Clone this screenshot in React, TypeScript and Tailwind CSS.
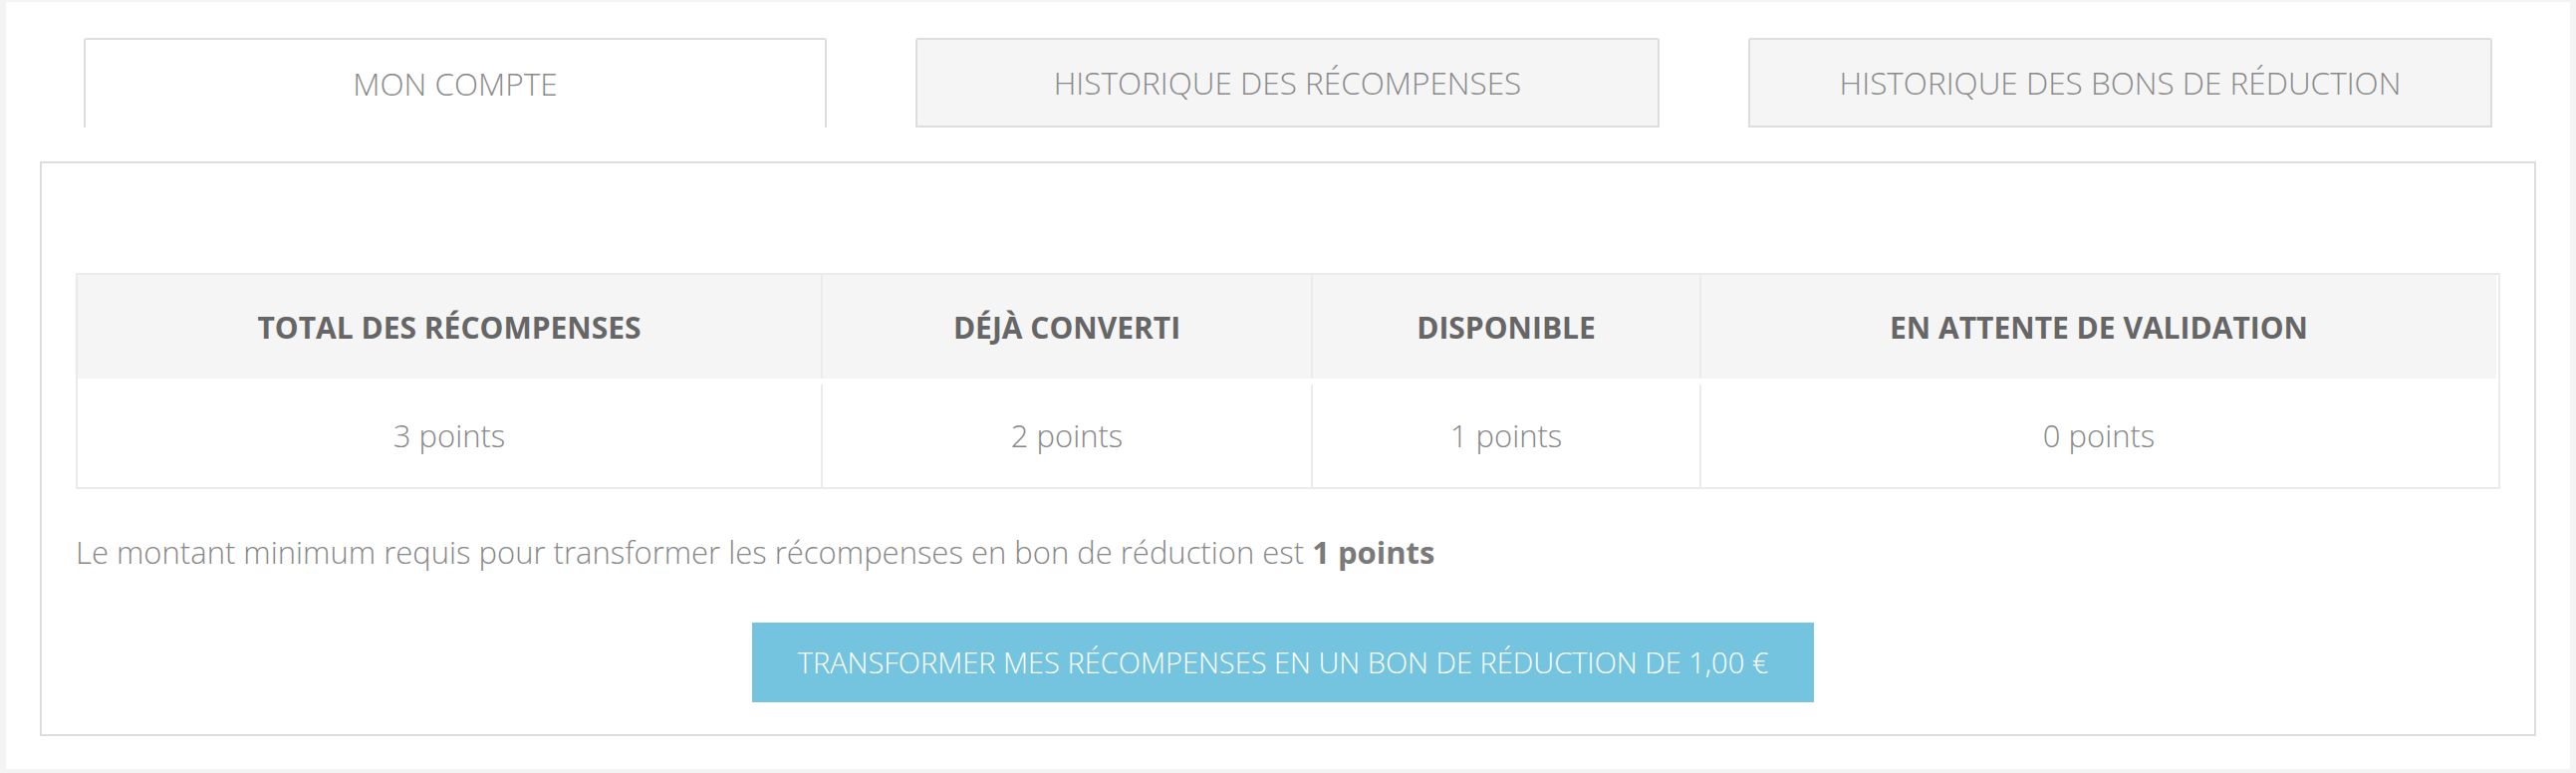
import React from "react";

const tabs = [
  { label: "MON COMPTE", active: true },
  { label: "HISTORIQUE DES RÉCOMPENSES", active: false },
  { label: "HISTORIQUE DES BONS DE RÉDUCTION", active: false },
];

const cols = [
  { head: "TOTAL DES RÉCOMPENSES", value: "3 points" },
  { head: "DÉJÀ CONVERTI", value: "2 points" },
  { head: "DISPONIBLE", value: "1 points" },
  { head: "EN ATTENTE DE VALIDATION", value: "0 points" },
];

export default function App() {
  return (
    <div className="w-[2586px] h-[776px] bg-[#f4f4f4] pt-[2px] pl-[6px] pr-[6px] pb-[4px] font-['Open_Sans',sans-serif]">
      <div className="h-full bg-white px-[34px] pt-[36px]">
        {/* Tabs */}
        <div className="flex justify-between px-[44px]">
          {tabs.map((t) => (
            <div
              key={t.label}
              className={
                t.active
                  ? "w-[746px] h-[90px] flex items-center justify-center rounded-t-[3px] border-2 border-b-0 border-[#dddddd] bg-white text-[#8a8a8a] text-[31.5px] font-light"
                  : "w-[747px] h-[90px] flex items-center justify-center rounded-t-[3px] border-2 border-[#dddddd] bg-[#f5f5f5] text-[#8a8a8a] text-[31.5px] font-light"
              }
            >
              {t.label}
            </div>
          ))}
        </div>

        {/* Panel */}
        <div className="mt-[34px] border-2 border-[#dddddd] px-[34px] pt-[110px] pb-[32px]">
          <div className="border-2 border-[#ebebeb]">
            <div className="grid grid-cols-[748px_492px_390px_798px] bg-white">
              {cols.map((c, i) => (
                <div
                  key={c.head}
                  className={
                    i < 3
                      ? "h-[104px] flex items-center justify-center bg-[#f5f5f5] border-r-2 border-[#ebebeb] text-[30px] font-bold text-[#666666]"
                      : "h-[104px] flex items-center justify-center bg-[#f5f5f5] text-[30px] font-bold text-[#666666]"
                  }
                >
                  {c.head}
                </div>
              ))}
            </div>
            <div className="h-[6px] bg-white" />
            <div className="grid grid-cols-[748px_492px_390px_798px]">
              {cols.map((c, i) => (
                <div
                  key={c.value + i}
                  className={
                    i < 3
                      ? "h-[103px] flex items-center justify-center border-r-2 border-[#ebebeb] text-[31px] font-light text-[#888888]"
                      : "h-[103px] flex items-center justify-center text-[31px] font-light text-[#888888]"
                  }
                >
                  {c.value}
                </div>
              ))}
            </div>
          </div>

          <p className="mt-[42px] leading-[42px] text-[31px] font-light text-[#888888]">
            Le montant minimum requis pour transformer les récompenses en bon de réduction est{" "}
            <span className="font-bold text-[#7a7a7a]">1 points</span>
          </p>

          <div className="mt-[50px] flex justify-center">
            <button className="w-[1066px] h-[80px] bg-[#74c4df] text-white text-[29px] font-light -translate-x-[5px]">
              TRANSFORMER MES RÉCOMPENSES EN UN BON DE RÉDUCTION DE 1,00 €
            </button>
          </div>
        </div>
      </div>
    </div>
  );
}
